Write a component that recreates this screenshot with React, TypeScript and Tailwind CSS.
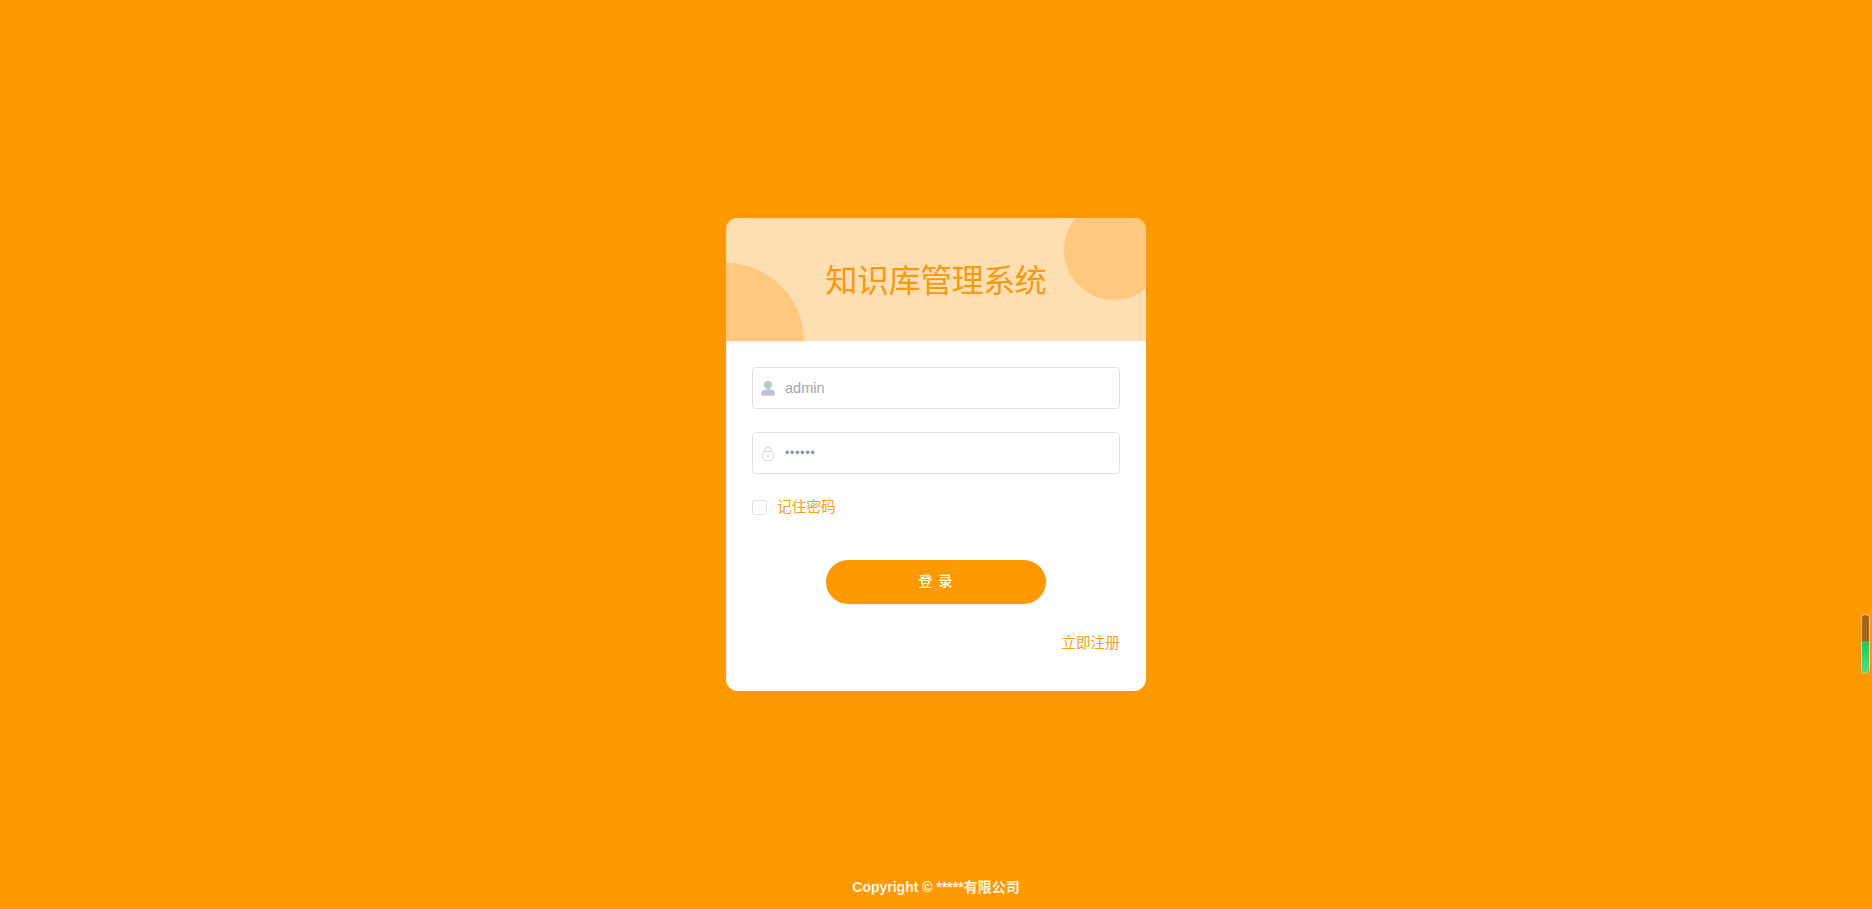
import React from "react";

const UserIcon = () => (
  <svg width="14" height="15" viewBox="0 0 14 15" className="shrink-0">
    <circle cx="7" cy="4" r="3.9" fill="#c0c4cc" />
    <path d="M0 13C0 10 3 8.300 7 8.300s7 1.700 7 4.700c0 1.200-.6 1.800-1.600 1.800H1.600C.6 14.800 0 14.200 0 13z" fill="#c0c4cc" />
  </svg>
);

const LockIcon = () => (
  <svg width="14" height="15" viewBox="0 0 14 15" fill="none" className="shrink-0">
    <path d="M3.800 5.800V4.200C3.800 2.200 5.200 1 7 1s3.200 1.200 3.200 3.200v1.600" stroke="#cfd2d8" strokeWidth="1" />
    <path d="M1.500 8.200C1.500 6.600 2.700 5.500 4.200 5.500h5.600c1.500 0 2.700 1.100 2.700 2.700v3.300c0 1.800-1.300 3-3 3h-5c-1.700 0-3-1.200-3-3z" stroke="#cfd2d8" strokeWidth="1" />
    <circle cx="7" cy="10" r="0.900" fill="#c8ccd3" />
  </svg>
);

export default function App() {
  return (
    <div className="relative grid h-screen grid-rows-[1fr_auto_1fr] overflow-hidden bg-[#ff9900] font-['Liberation_Sans','Noto_Sans_CJK_SC',sans-serif]">
      <div />
      <div className="mx-auto w-[420px] overflow-hidden rounded-xl bg-white">
        {/* header with the two decorative circles */}
        <div className="relative flex h-[123px] items-center justify-center overflow-hidden bg-[#ffdfb1] pt-[2px]">
          <div className="absolute left-[338px] top-[-18px] h-[100px] w-[100px] rounded-full bg-[#ffc780]" />
          <div className="absolute left-[-78px] top-[45px] h-[156px] w-[156px] rounded-full bg-[#ffc780]" />
          <h1 className="relative text-[32px] font-normal leading-none tracking-[-0.45px] text-[#f59a0c]">知识库管理系统</h1>
        </div>

        <div className="px-[26px] pb-[39px] pt-[26px]">
          <div className="flex h-[42px] items-center gap-[10px] rounded border border-[#dfe1e6] pl-[8px]">
            <UserIcon />
            <span className="pt-px text-[14.5px] text-[#a3a6ad]">admin</span>
          </div>
          <div className="mt-[23px] flex h-[42px] items-center gap-[10px] rounded border border-[#dfe1e6] pl-[8px]">
            <LockIcon />
            <span className="text-[12px] leading-none tracking-[0.9px] text-[#8a8d93]">••••••</span>
          </div>

          <label className="mt-[26px] flex h-[15px] items-center gap-[10px]">
            <span className="h-[15px] w-[15px] rounded-[2px] border border-[#dfe1e6] bg-white" />
            <span className="text-[14.7px] leading-none text-[#f5a01e]">记住密码</span>
          </label>

          <button className="mx-auto mt-[45px] block h-[44px] w-[220px] rounded-full bg-[#ff9900] pb-px text-[14px] font-medium tracking-[1px] text-white">
            登 录
          </button>

          <div className="mt-[30px] text-right text-[14.7px] leading-[18px] text-[#f5a01e]">立即注册</div>
        </div>
      </div>
      <div className="flex items-end justify-center pb-[14px]">
        <p className="text-[14px] font-bold leading-[16px] text-[#fff3df]">Copyright © *****有限公司</p>
      </div>

      {/* floating level indicator on the right edge */}
      <div className="absolute left-[1861px] top-[614px] h-[60px] w-[9px] overflow-hidden rounded-full border border-[#ffcb80]">
        <div className="h-[45%] bg-[#a8641c]" />
        <div className="h-[55%] bg-gradient-to-b from-[#25c45f] to-[#4fe07f]" />
      </div>
    </div>
  );
}
